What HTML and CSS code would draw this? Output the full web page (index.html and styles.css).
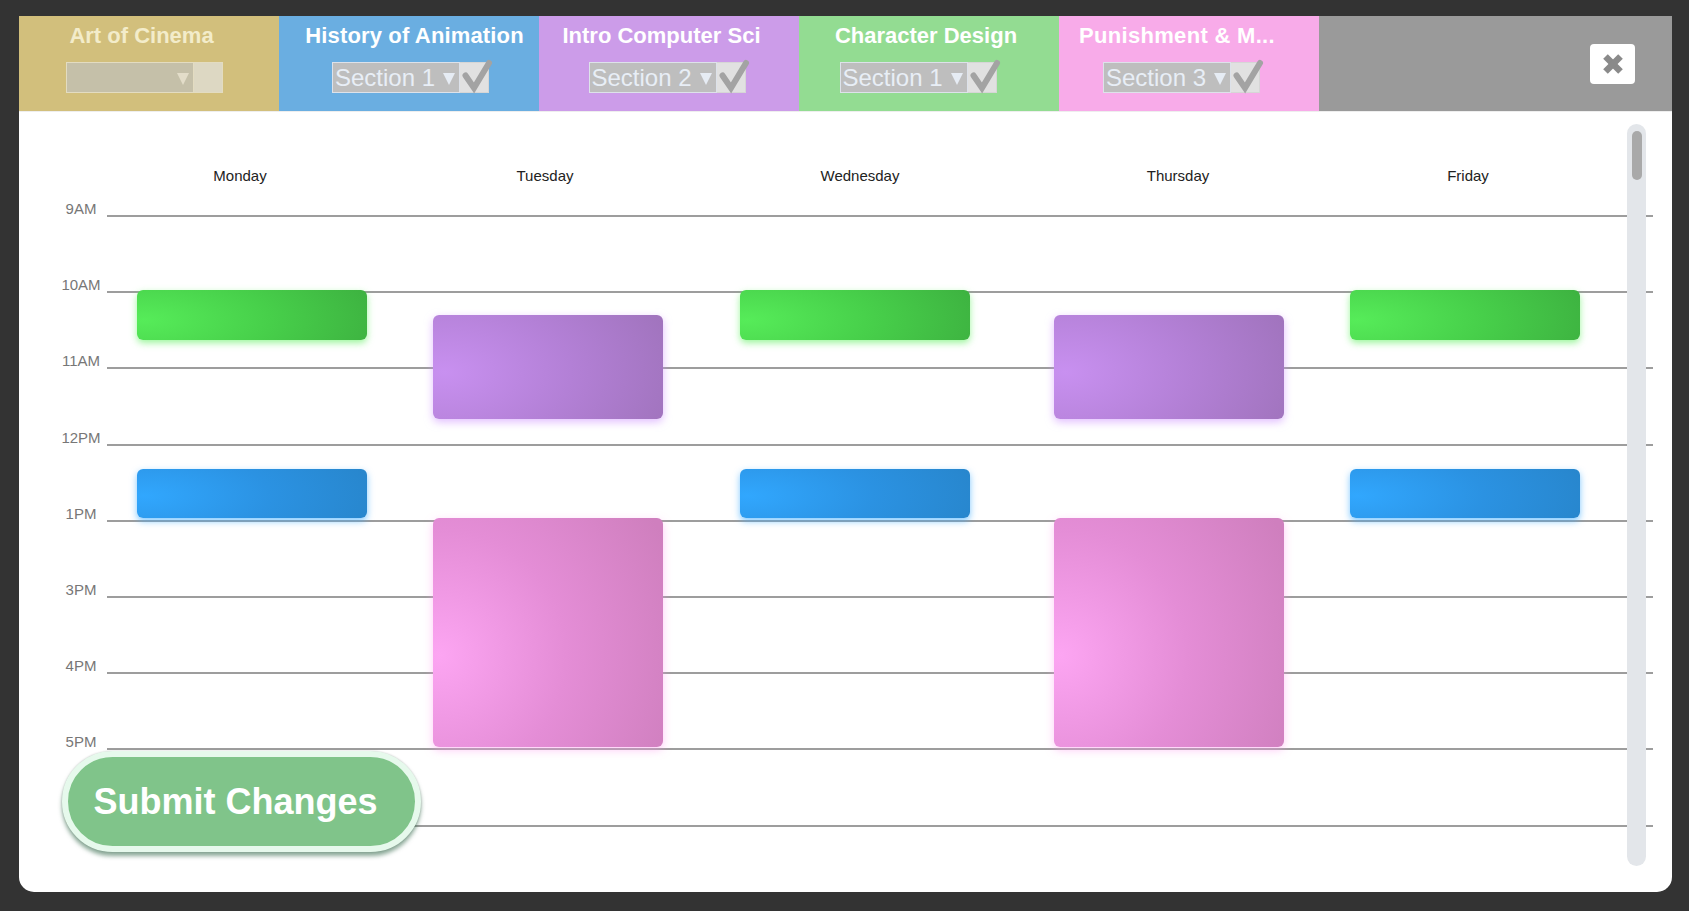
FILE: index.html
```
<!DOCTYPE html>
<html lang="en">
<head>
<meta charset="utf-8">
<title>Schedule</title>
<link rel="stylesheet" href="styles.css">
</head>
<body>
<div class="page">
  <div class="card">
    <header class="tabs">
      <div class="tab tab-cinema disabled">
        <div class="tab-title">Art of Cinema</div>
        <div class="picker">
          <div class="select"><span class="select-text"></span><span class="arrow"></span></div>
          <div class="check"></div>
        </div>
      </div>
      <div class="tab tab-animation">
        <div class="tab-title">History of Animation</div>
        <div class="picker">
          <div class="select"><span class="select-text">Section 1</span><span class="arrow"></span></div>
          <div class="check"><svg class="tick" width="29" height="31" viewBox="0 0 29 31"><polyline points="5.5,12.5 14,25 29,0" /></svg></div>
        </div>
      </div>
      <div class="tab tab-cs">
        <div class="tab-title">Intro Computer Sci</div>
        <div class="picker">
          <div class="select"><span class="select-text">Section 2</span><span class="arrow"></span></div>
          <div class="check"><svg class="tick" width="29" height="31" viewBox="0 0 29 31"><polyline points="5.5,12.5 14,25 29,0" /></svg></div>
        </div>
      </div>
      <div class="tab tab-character">
        <div class="tab-title">Character Design</div>
        <div class="picker">
          <div class="select"><span class="select-text">Section 1</span><span class="arrow"></span></div>
          <div class="check"><svg class="tick" width="29" height="31" viewBox="0 0 29 31"><polyline points="5.5,12.5 14,25 29,0" /></svg></div>
        </div>
      </div>
      <div class="tab tab-punish">
        <div class="tab-title">Punishment &amp; M...</div>
        <div class="picker">
          <div class="select"><span class="select-text">Section 3</span><span class="arrow"></span></div>
          <div class="check"><svg class="tick" width="29" height="31" viewBox="0 0 29 31"><polyline points="5.5,12.5 14,25 29,0" /></svg></div>
        </div>
      </div>
      <div class="tab-close">
        <button class="close" type="button" aria-label="Close">
          <svg width="22" height="22" viewBox="0 0 22 22"><line x1="3.5" y1="3.5" x2="18.5" y2="18.5"/><line x1="18.5" y1="3.5" x2="3.5" y2="18.5"/></svg>
        </button>
      </div>
    </header>

    <main class="body">
      <div class="days">
        <div class="day">Monday</div>
        <div class="day">Tuesday</div>
        <div class="day">Wednesday</div>
        <div class="day">Thursday</div>
        <div class="day">Friday</div>
      </div>

      <div class="schedule">
        <div class="hour"><span class="hour-label">9AM</span><span class="hour-line"></span></div>
        <div class="hour"><span class="hour-label">10AM</span><span class="hour-line"></span></div>
        <div class="hour"><span class="hour-label">11AM</span><span class="hour-line"></span></div>
        <div class="hour"><span class="hour-label">12PM</span><span class="hour-line"></span></div>
        <div class="hour"><span class="hour-label">1PM</span><span class="hour-line"></span></div>
        <div class="hour"><span class="hour-label">3PM</span><span class="hour-line"></span></div>
        <div class="hour"><span class="hour-label">4PM</span><span class="hour-line"></span></div>
        <div class="hour"><span class="hour-label">5PM</span><span class="hour-line"></span></div>
        <div class="hour"><span class="hour-label">6PM</span><span class="hour-line"></span></div>

        <div class="events">
          <div class="event green mon slot-a"></div>
          <div class="event green wed slot-a"></div>
          <div class="event green fri slot-a"></div>
          <div class="event purple tue slot-b"></div>
          <div class="event purple thu slot-b"></div>
          <div class="event blue mon slot-c"></div>
          <div class="event blue wed slot-c"></div>
          <div class="event blue fri slot-c"></div>
          <div class="event pink tue slot-d"></div>
          <div class="event pink thu slot-d"></div>
        </div>
      </div>

      <div class="scrollbar"><div class="thumb"></div></div>
      <button class="submit" type="button">Submit Changes</button>
    </main>
  </div>
</div>
</body>
</html>
```

FILE: styles.css
```
* { box-sizing: border-box; }

html, body {
  margin: 0;
  padding: 0;
  background: #333333;
}

body {
  font-family: "Liberation Sans", Arial, sans-serif;
}

.page {
  padding: 16px 17px 19px 19px;
  height: 911px;
}

.card {
  width: 1653px;
  height: 876px;
  background: #ffffff;
  border-radius: 0 0 15px 15px;
  overflow: hidden;
  display: flex;
  flex-direction: column;
}

/* ---------- header tabs ---------- */
.tabs {
  display: flex;
  height: 96px;
  flex: none;
  border-bottom: 1px solid #eeeeee;
}

.tab {
  width: 260px;
  flex: none;
  padding: 7px 15px 0 0;
  text-align: center;
}

.tab-cinema { background: #d2bf7c; }
.tab-animation { background: #6aaee1; padding-left: 18px; }
.tab-cs { background: #cc9ce9; }
.tab-character { background: #93dc92; }
.tab-punish { background: #f8abe9; }

.tab-title {
  font-weight: 700;
  font-size: 22px;
  line-height: 26px;
  color: #ffffff;
  white-space: nowrap;
}

.tab-animation .tab-title { padding-left: 8px; letter-spacing: 0.15px; }
.tab-character .tab-title { padding-left: 9px; }
.tab-punish .tab-title { padding-right: 9px; letter-spacing: 0.3px; }

.picker {
  display: flex;
  justify-content: center;
  margin-top: 13px;
}

.tab-cinema .picker { padding-left: 5px; }
.tab-cs .picker { padding-left: 11px; }
.tab-character .picker { padding-right: 7px; }

.select {
  width: 128px;
  height: 31px;
  background: #bebebe;
  border: 1px solid #dde2ea;
  display: flex;
  align-items: center;
  justify-content: space-between;
  padding: 0 4px 0 2px;
}

.select-text {
  font-size: 24px;
  line-height: 29px;
  color: #e8eef6;
  white-space: nowrap;
}

.arrow {
  width: 0;
  height: 0;
  border-left: 6.5px solid transparent;
  border-right: 6.5px solid transparent;
  border-top: 12px solid #e6ecf4;
  margin-top: 2px;
}

.check {
  width: 29px;
  height: 31px;
  background: #e1e1e1;
  border: 1px solid #d6d6d6;
  border-left: none;
}

.tick {
  display: block;
  overflow: visible;
}

.tick polyline {
  fill: none;
  stroke: #a3a3a3;
  stroke-width: 6;
  stroke-linecap: round;
  stroke-linejoin: miter;
}

.disabled .tab-title { color: #f3ecca; }
.disabled .select { background: #c5c0a9; border-color: #e3dcc1; }
.disabled .arrow { border-top-color: #e3ddc9; }
.disabled .check { background: #ddd8c3; border-color: #e3dcc1; }

.tab-close {
  flex: 1;
  background: #9a9a9a;
  display: flex;
  align-items: center;
  justify-content: flex-end;
  padding-right: 37px;
}

.close {
  width: 45px;
  height: 40px;
  border: none;
  border-radius: 4px;
  background: #ffffff;
  padding: 0;
  display: flex;
  align-items: center;
  justify-content: center;
}

.close svg { display: block; }

.close line {
  stroke: #8a8a8a;
  stroke-width: 6.5;
  stroke-linecap: butt;
}

/* ---------- body ---------- */
.body {
  position: relative;
  flex: 1;
  overflow: hidden;
}

.days {
  display: grid;
  grid-template-columns: 266px 344px 286px 350px 230px;
  padding: 55px 0 0 88px;
  font-size: 15px;
  line-height: 18px;
  color: #222222;
}

.day { text-align: center; }

.schedule {
  position: relative;
  margin-top: 30px;
  padding-right: 19px;
}

.hour {
  display: flex;
  height: 76.2px;
}

.hour-label {
  width: 52px;
  margin-left: 36px;
  margin-top: -14px;
  height: 15px;
  font-size: 15px;
  line-height: 15px;
  color: #777777;
  text-align: center;
  white-space: nowrap;
}

.hour-line {
  flex: 1;
  border-top: 2px solid #9d9d9d;
}

.events {
  position: absolute;
  top: -1.5px;
  left: 88px;
  right: 19px;
  display: grid;
  grid-template-columns: 30px 230px 66px 230px 77px 230px 84px 230px 66px 230px;
  grid-template-rows: repeat(24, 25.4px);
}

.mon { grid-column: 2; }
.tue { grid-column: 4; }
.wed { grid-column: 6; }
.thu { grid-column: 8; }
.fri { grid-column: 10; }

.slot-a { grid-row: 4 / span 2; }
.slot-b { grid-row: 5 / span 4; margin-bottom: -2px; }
.slot-c { grid-row: 11 / span 2; margin-top: 2px; }
.slot-d { grid-row: 13 / span 9; }

.event {
  border-radius: 6px;
}

.green {
  background: radial-gradient(ellipse 110% 180% at 3% 60%, #56ec59 0%, #47cf4a 50%, #3cae3f 100%);
  box-shadow: 0 3px 7px rgba(90, 240, 90, 0.6);
}

.purple {
  background: radial-gradient(ellipse 110% 140% at 5% 55%, #c890f0 0%, #b380d6 50%, #9e72ba 100%);
  box-shadow: 0 3px 8px rgba(205, 145, 255, 0.6);
}

.blue {
  background: radial-gradient(ellipse 110% 180% at 3% 55%, #31a7fe 0%, #2b92e2 50%, #2784c9 100%);
  box-shadow: 0 3px 7px rgba(60, 170, 255, 0.65);
}

.pink {
  background: radial-gradient(ellipse 110% 110% at 3% 60%, #fca5f2 0%, #e48dd6 50%, #cf7fbe 100%);
  box-shadow: 0 3px 8px rgba(255, 150, 240, 0.5);
}

.scrollbar {
  position: absolute;
  top: 12px;
  right: 26px;
  width: 19px;
  height: 742px;
  border-radius: 10px;
  background: #e3e6ea;
  padding-top: 7px;
}

.thumb {
  width: 10px;
  height: 49px;
  margin: 0 auto;
  border-radius: 5px;
  background: #a9a9a9;
}

.submit {
  position: absolute;
  left: 43px;
  top: 639px;
  width: 359px;
  height: 101px;
  border: 6px solid #e6f9ec;
  border-radius: 60px;
  background: #80c48a;
  color: #ffffff;
  font-family: "Liberation Sans", Arial, sans-serif;
  font-weight: 700;
  font-size: 36px;
  line-height: 40px;
  padding: 0 12px 0 0;
  text-align: center;
  box-shadow: 0 4px 4px rgba(45, 100, 70, 0.55), 0 0 2px rgba(0, 0, 0, 0.2);
}
```
